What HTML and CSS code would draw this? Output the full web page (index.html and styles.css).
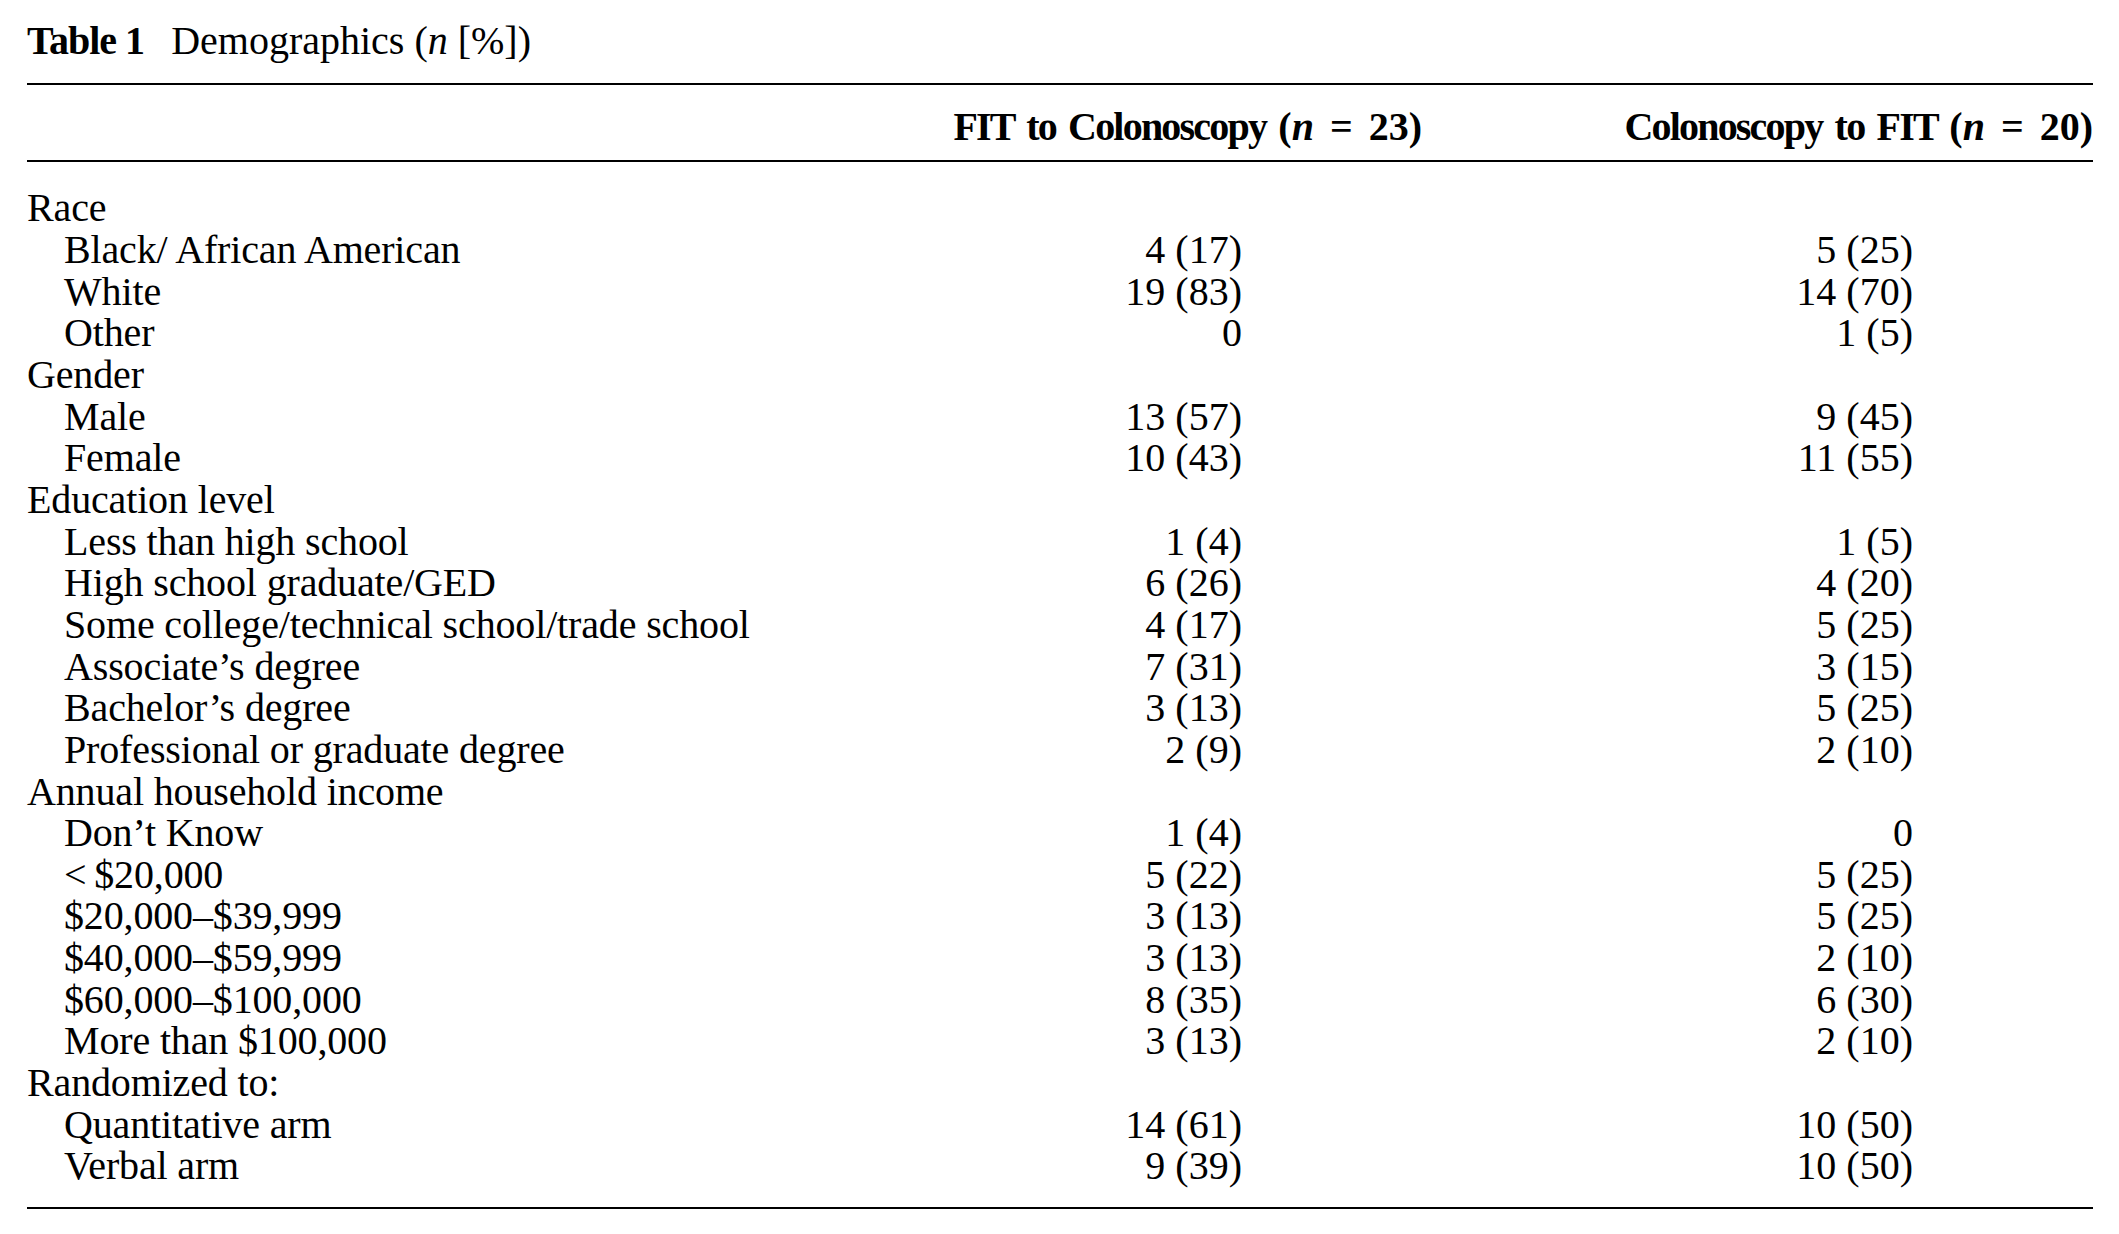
FILE: index.html
```html
<!DOCTYPE html>
<html lang="en">
<head>
<meta charset="utf-8">
<title>Table 1 Demographics</title>
<link rel="stylesheet" href="styles.css">
</head>
<body>
<div class="page">
  <p class="caption"><b class="label">Table 1</b><span class="title">Demographics (<i>n</i> [%])</span></p>
  <table class="demo">
    <colgroup>
      <col class="c-label">
      <col class="c-a">
      <col class="c-b">
    </colgroup>
    <thead>
      <tr>
        <th></th>
        <th><span class="hd">FIT to Colonoscopy </span>(<i>n</i><span class="eq">=</span>23)</th>
        <th><span class="hd">Colonoscopy to FIT </span>(<i>n</i><span class="eq">=</span>20)</th>
      </tr>
    </thead>
    <tbody>
      <tr class="first cat"><td>Race</td><td></td><td></td></tr>
      <tr><td>Black/ African American</td><td>4 (17)</td><td>5 (25)</td></tr>
      <tr><td>White</td><td>19 (83)</td><td>14 (70)</td></tr>
      <tr><td>Other</td><td>0</td><td>1 (5)</td></tr>
      <tr class="cat"><td>Gender</td><td></td><td></td></tr>
      <tr><td>Male</td><td>13 (57)</td><td>9 (45)</td></tr>
      <tr><td>Female</td><td>10 (43)</td><td>11 (55)</td></tr>
      <tr class="cat"><td>Education level</td><td></td><td></td></tr>
      <tr><td>Less than high school</td><td>1 (4)</td><td>1 (5)</td></tr>
      <tr><td>High school graduate/GED</td><td>6 (26)</td><td>4 (20)</td></tr>
      <tr><td>Some college/technical school/trade school</td><td>4 (17)</td><td>5 (25)</td></tr>
      <tr><td>Associate’s degree</td><td>7 (31)</td><td>3 (15)</td></tr>
      <tr><td>Bachelor’s degree</td><td>3 (13)</td><td>5 (25)</td></tr>
      <tr><td>Professional or graduate degree</td><td>2 (9)</td><td>2 (10)</td></tr>
      <tr class="cat"><td>Annual household income</td><td></td><td></td></tr>
      <tr><td>Don’t Know</td><td>1 (4)</td><td>0</td></tr>
      <tr><td>&lt;&#8201;$20,000</td><td>5 (22)</td><td>5 (25)</td></tr>
      <tr><td>$20,000–$39,999</td><td>3 (13)</td><td>5 (25)</td></tr>
      <tr><td>$40,000–$59,999</td><td>3 (13)</td><td>2 (10)</td></tr>
      <tr><td>$60,000–$100,000</td><td>8 (35)</td><td>6 (30)</td></tr>
      <tr><td>More than $100,000</td><td>3 (13)</td><td>2 (10)</td></tr>
      <tr class="cat"><td>Randomized to:</td><td></td><td></td></tr>
      <tr><td>Quantitative arm</td><td>14 (61)</td><td>10 (50)</td></tr>
      <tr class="last"><td>Verbal arm</td><td>9 (39)</td><td>10 (50)</td></tr>
    </tbody>
  </table>
</div>
</body>
</html>
```

FILE: styles.css
```css
html, body {
  margin: 0;
  padding: 0;
  background: #ffffff;
}

body {
  font-family: "Liberation Serif", "Times New Roman", serif;
  font-size: 40px;
  line-height: 41.66px;
  color: #000000;
}

.page {
  padding: 20px 0 0 27px;
  width: 2066px;
}

.caption {
  margin: 0 0 21px 0;
  white-space: nowrap;
}

.caption .label {
  font-weight: bold;
  letter-spacing: -1px;
}

.caption .title {
  margin-left: 27px;
}

.demo {
  width: 2066px;
  border-collapse: collapse;
  table-layout: fixed;
  border-bottom: 2px solid #000;
}

.c-label { width: 923px; }
.c-a { width: 472px; }
.c-b { width: 671px; }

.demo th,
.demo td {
  padding: 0;
  white-space: nowrap;
  vertical-align: baseline;
}

.demo thead th {
  font-weight: bold;
  text-align: right;
  padding-top: 21px;
  padding-bottom: 13px;
  border-top: 2px solid #000;
  border-bottom: 2px solid #000;
}

.demo thead .hd {
  letter-spacing: -1.8px;
  word-spacing: 4px;
}

.demo thead th i {
  font-style: italic;
}

.demo .eq {
  margin: 0 16px;
}

.demo tbody td {
  text-align: right;
  padding-right: 180px;
}

.demo tbody td:first-child {
  text-align: left;
  padding-right: 0;
  padding-left: 37px;
  letter-spacing: -0.15px;
}

.demo tbody tr.cat td:first-child {
  padding-left: 0;
}

.demo tbody tr.first td {
  padding-top: 25px;
}

.demo tbody tr.last td {
  padding-bottom: 20px;
}
```
